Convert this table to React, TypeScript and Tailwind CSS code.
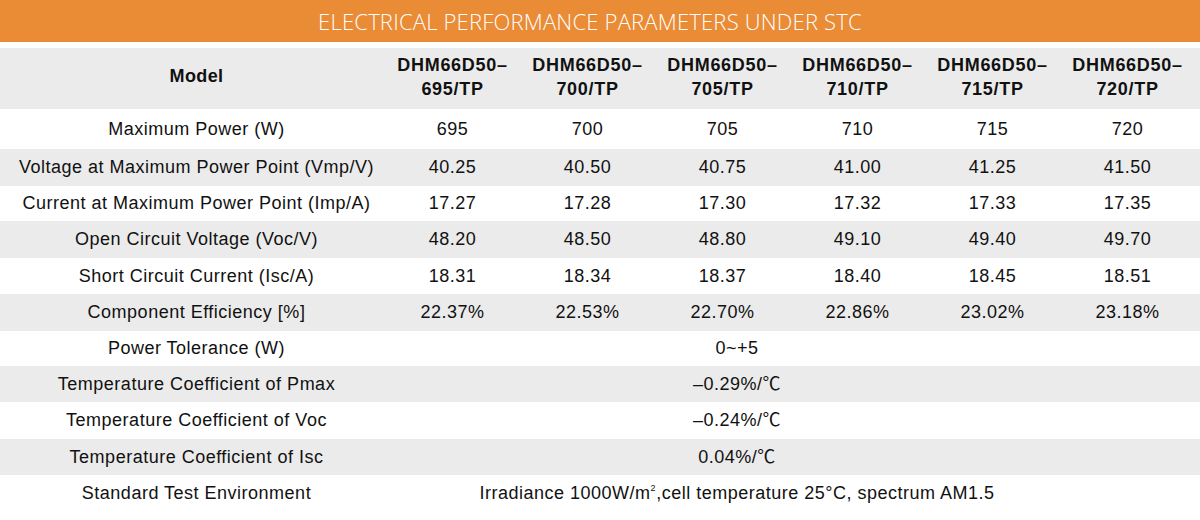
const models = ["695", "700", "705", "710", "715", "720"];

const rows: { label: string; values?: string[]; merged?: React.ReactNode; h: string }[] = [
  { label: "Maximum Power (W)", values: ["695", "700", "705", "710", "715", "720"], h: "h-[40px]" },
  { label: "Voltage at Maximum Power Point (Vmp/V)", values: ["40.25", "40.50", "40.75", "41.00", "41.25", "41.50"], h: "h-[37px]" },
  { label: "Current at Maximum Power Point (Imp/A)", values: ["17.27", "17.28", "17.30", "17.32", "17.33", "17.35"], h: "h-[35px]" },
  { label: "Open Circuit Voltage (Voc/V)", values: ["48.20", "48.50", "48.80", "49.10", "49.40", "49.70"], h: "h-[37px]" },
  { label: "Short Circuit Current (Isc/A)", values: ["18.31", "18.34", "18.37", "18.40", "18.45", "18.51"], h: "h-[36px]" },
  { label: "Component Efficiency [%]", values: ["22.37%", "22.53%", "22.70%", "22.86%", "23.02%", "23.18%"], h: "h-[37px]" },
  { label: "Power Tolerance (W)", merged: "0~+5", h: "h-[35px]" },
  { label: "Temperature Coefficient of Pmax", merged: "–0.29%/℃", h: "h-[36px]" },
  { label: "Temperature Coefficient of Voc", merged: "–0.24%/℃", h: "h-[37px]" },
  { label: "Temperature Coefficient of Isc", merged: "0.04%/℃", h: "h-[36px]" },
  {
    label: "Standard Test Environment",
    merged: (
      <>
        Irradiance 1000W/m<sup className="text-[9px] -top-[8px]">2</sup>,cell temperature 25°C, spectrum AM1.5
      </>
    ),
    h: "h-[36px]",
  },
];

export default function App() {
  return (
    <div className="w-[1200px] h-[520px] bg-white overflow-hidden text-[#111] font-['Liberation_Sans','Noto_Sans_CJK_SC',sans-serif]">
      {/* title band */}
      <div className="h-[42px] bg-[#ea8b35] flex items-center justify-center">
        <h1 className="text-white text-[22px] font-light tracking-[0.2px] font-['Open_Sans',sans-serif] pr-[20px]">
          ELECTRICAL PERFORMANCE PARAMETERS UNDER STC
        </h1>
      </div>

      <div className="mt-[6px]">
        {/* model header */}
        <div className="h-[61px] bg-[#ebebeb] grid grid-cols-[385px_repeat(6,135px)] items-center">
          <div className="pl-[8px] pb-[4px] text-center text-[18px] font-bold tracking-[0.4px]">Model</div>
          {models.map((m) => (
            <div key={m} className="pb-[4px] text-center text-[18px] font-bold leading-[24px] tracking-[0.7px]">
              DHM66D50–
              <br />
              {m}/TP
            </div>
          ))}
        </div>

        {rows.map((r, i) => (
          <div
            key={r.label}
            className={`${r.h} ${i % 2 === 1 ? "bg-[#ebebeb]" : "bg-white"} grid grid-cols-[385px_repeat(6,135px)] items-center text-[18px] tracking-[0.5px]`}
          >
            <div className="pl-[8px] text-center whitespace-nowrap">{r.label}</div>
            {r.values ? (
              r.values.map((v, j) => (
                <div key={j} className="text-center">
                  {v}
                </div>
              ))
            ) : (
              <div className="col-span-6 text-center pr-[106px] whitespace-nowrap">{r.merged}</div>
            )}
          </div>
        ))}
      </div>
    </div>
  );
}
